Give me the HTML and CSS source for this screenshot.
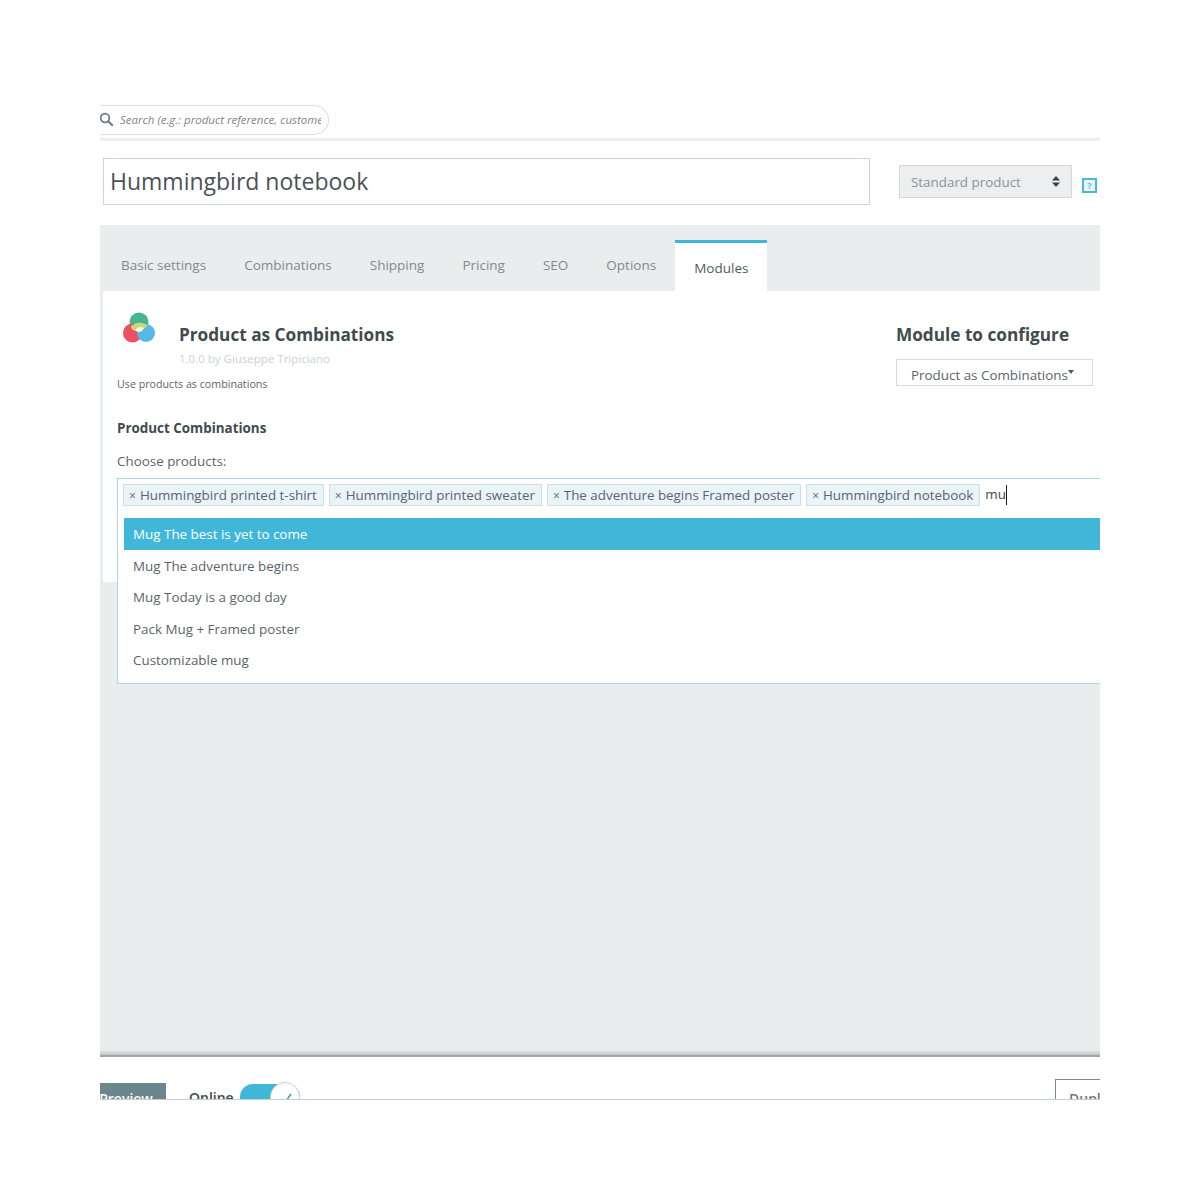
FILE: index.html
```html
<!DOCTYPE html>
<html lang="en">
<head>
<meta charset="utf-8">
<title>Hummingbird notebook</title>
<link rel="stylesheet" href="styles.css">
</head>
<body>
<div class="frame">
  <header class="topbar">
    <div class="search">
      <svg class="search-icon" width="15" height="15" viewBox="0 0 15 15"><circle cx="6" cy="6" r="4.3" fill="none" stroke="#6c7a80" stroke-width="1.7"/><path d="M9.2 9.2 13.8 13.8" stroke="#6c7a80" stroke-width="2"/></svg>
      <span class="search-text">Search (e.g.: product reference, custome</span>
    </div>
  </header>
  <div class="title-row">
    <div class="title-input">Hummingbird notebook</div>
    <div class="type-select"><span>Standard product</span>
      <svg width="8" height="11" viewBox="0 0 8 11"><path d="M4 0 8 4.4H0ZM4 11 0 6.6H8Z" fill="#3a4448"/></svg>
    </div>
    <div class="help">?</div>
  </div>
  <main class="panel">
    <nav class="tabs">
      <span class="tab">Basic settings</span>
      <span class="tab">Combinations</span>
      <span class="tab">Shipping</span>
      <span class="tab">Pricing</span>
      <span class="tab">SEO</span>
      <span class="tab">Options</span>
      <span class="tab active">Modules</span>
    </nav>
    <section class="card">
      <div class="module-head">
        <div class="module-info">
          <div class="module-id">
            <svg class="logo" width="32" height="32" viewBox="0 0 32 32">
              <circle cx="16" cy="10" r="9.5" fill="#45b58c"/>
              <circle cx="9.5" cy="21" r="9.5" fill="#ea4f62"/>
              <circle cx="23" cy="21" r="9" fill="#55b8e6"/>
              <path d="M8 14Q16 8 24 13 24 16 20 17 16 13 12 19 8 18 8 14Z" fill="#c9d777"/>
              <path d="M12 18Q16 13 21 16 19 20 16 20 13 20 12 18Z" fill="#fbf6e6"/>
            </svg>
            <div class="module-names">
              <h2 class="module-name">Product as Combinations</h2>
              <div class="module-version">1.0.0 by Giuseppe Tripiciano</div>
            </div>
          </div>
          <div class="module-desc">Use products as combinations</div>
        </div>
        <div class="configure">
          <h2 class="configure-title">Module to configure</h2>
          <div class="configure-select">Product as Combinations<i class="caret"></i></div>
        </div>
      </div>
      <h3 class="section-title">Product Combinations</h3>
      <div class="choose">Choose products:</div>
      <div class="combo">
        <div class="tags">
          <span class="tag"><b>×</b>Hummingbird printed t-shirt</span>
          <span class="tag"><b>×</b>Hummingbird printed sweater</span>
          <span class="tag"><b>×</b>The adventure begins Framed poster</span>
          <span class="tag"><b>×</b>Hummingbird notebook</span>
          <span class="typed">mu</span>
        </div>
        <ul class="options">
          <li class="option selected">Mug The best is yet to come</li>
          <li class="option">Mug The adventure begins</li>
          <li class="option">Mug Today is a good day</li>
          <li class="option">Pack Mug + Framed poster</li>
          <li class="option">Customizable mug</li>
        </ul>
      </div>
    </section>
  </main>
  <footer class="footer">
    <span class="preview">Preview</span>
    <span class="online">Online</span>
    <span class="switch"><span class="knob"><svg width="18" height="16" viewBox="0 0 18 16"><path d="M2 10 6.5 14.5 14 4" fill="none" stroke="#4a9ab3" stroke-width="1.6"/></svg></span></span>
    <span class="duplicate">Duplicate</span>
  </footer>
</div>
</body>
</html>
```
FILE: styles.css
```css
* { box-sizing: border-box; }
html, body { margin: 0; padding: 0; background: #fff; }
body { font-family: "Open Sans", "Liberation Sans", sans-serif; color: #4f5a5f; }
h2, h3, ul { margin: 0; padding: 0; }

.frame {
  width: 1000px;
  height: 1100px;
  margin-left: 100px;
  padding-top: 105px;
  overflow: hidden;
  border-bottom: 1px solid #c9cdce;
}

.topbar {
  height: 36px;
  border-bottom: 3px solid #eceeef;
}
.search {
  display: flex;
  align-items: center;
  gap: 6px;
  width: 229px;
  height: 30px;
  padding-bottom: 2px;
  border: 1px solid #d8dcdd;
  border-left: 0;
  border-radius: 0 15px 15px 0;
  overflow: hidden;
}
.search-icon { flex: none; margin-left: -1px; }
.search-text {
  width: 201px;
  overflow: hidden;
  white-space: nowrap;
  font-size: 11.5px;
  font-style: italic;
  color: #7d878b;
}

.title-row {
  display: flex;
  height: 84px;
  padding: 17px 0 0 3px;
  align-items: flex-start;
}
.title-input {
  width: 767px;
  height: 47px;
  padding-left: 6px;
  border: 1px solid #cfd4d6;
  font-size: 23px;
  line-height: 45px;
  color: #4a5357;
}
.type-select {
  display: flex;
  align-items: center;
  justify-content: space-between;
  width: 173px;
  height: 33px;
  margin: 7px 0 0 29px;
  padding: 0 11px;
  background: #eceeef;
  border: 1px solid #d3d8da;
  font-size: 13.4px;
  color: #8a9497;
}
.help {
  width: 15px;
  height: 15px;
  margin: 20px 0 0 10px;
  border: 2px solid #4bb8d4;
  background: #e8f4f7;
  font-size: 9px;
  font-weight: 700;
  line-height: 11px;
  text-align: center;
  color: #6fb8cb;
}

.panel {
  height: 832px;
  background: linear-gradient(to top, #c2c5c6, #eaedee 5px);
  border-bottom: 2px solid #a3a6a7;
}
.tabs {
  display: flex;
  align-items: flex-start;
  height: 66px;
  padding: 15px 0 0 2px;
  font-size: 13.5px;
  color: #81898d;
}
.tab {
  padding: 16px 19px 0;
  line-height: 19px;
}
.active {
  height: 51px;
  padding-top: 16px;
  background: #fff;
  border-top: 3px solid #3fb6d8;
  color: #4f5a5f;
}
.card {
  width: 997px;
  height: 291px;
  margin-left: 3px;
  padding: 21px 0 0 14px;
  background: #fff;
}

.module-head {
  display: flex;
  justify-content: space-between;
  height: 95px;
}
.module-id {
  display: flex;
  align-items: flex-start;
  gap: 24px;
  height: 61px;
}
.logo { flex: none; margin-left: 6px; }
.module-names { padding-top: 11px; }
.module-name, .configure-title {
  font-size: 17.2px;
  font-weight: 700;
  line-height: 24px;
  color: #414a4e;
}
.module-version {
  margin-top: 1px;
  font-size: 11.5px;
  line-height: 22px;
  color: #ccd1d3;
}
.module-desc {
  margin-top: 3px;
  font-size: 10.7px;
  line-height: 16px;
  color: #5b6569;
}
.configure {
  width: 204px;
  padding-top: 11px;
}
.configure-title { white-space: nowrap; }
.configure-select {
  width: 197px;
  height: 27px;
  margin-top: 12px;
  padding-left: 14px;
  border: 1px solid #d6dadb;
  font-size: 13.4px;
  line-height: 30px;
  color: #5b6569;
  white-space: nowrap;
}
.caret {
  display: inline-block;
  margin: 0 0 8px 0;
  border: 3.5px solid transparent;
  border-top: 4px solid #4f5a5f;
  border-bottom: 0;
  vertical-align: middle;
}

.section-title {
  margin-top: 11px;
  font-size: 13.4px;
  font-weight: 700;
  line-height: 20px;
  color: #414a4e;
}
.choose {
  margin-top: 13px;
  font-size: 13.4px;
  line-height: 20px;
  color: #5b6569;
}
.combo {
  width: 983px;
  height: 206px;
  margin-top: 7px;
  background: #fff;
  border: 1px solid #a6d9e6;
  border-right: 0;
}
.tags {
  display: flex;
  align-items: center;
  gap: 5px;
  height: 39px;
  padding: 0 0 7px 5px;
  white-space: nowrap;
}
.tag {
  height: 22px;
  padding: 0 6px 0 5px;
  background: #e9f4f8;
  border: 1px solid #cfdfe3;
  font-size: 13.4px;
  line-height: 20px;
  color: #5b6569;
}
.tag b {
  margin-right: 4px;
  font-weight: 400;
  font-size: 12px;
}
.typed {
  height: 20px;
  border-right: 1px solid #222;
  font-size: 13.4px;
  line-height: 18px;
  color: #414a4e;
}
.options {
  list-style: none;
  padding-left: 6px;
}
.option {
  height: 31.6px;
  padding-left: 9px;
  font-size: 13.4px;
  line-height: 32px;
  color: #5b6569;
}
.selected {
  background: #40b7d9;
  color: #fff;
}

.footer {
  display: flex;
  align-items: flex-start;
  height: 45px;
  padding-top: 26px;
  font-size: 14px;
  color: #414a4e;
}
.preview {
  flex: none;
  width: 80px;
  height: 30px;
  margin-left: -14px;
  background: #6c868e;
  color: #fff;
  font-weight: 600;
  line-height: 32px;
  text-align: center;
  white-space: nowrap;
}
.online {
  margin: 5px 0 0 23px;
  font-weight: 600;
  line-height: 20px;
}
.switch {
  position: relative;
  width: 60px;
  height: 26px;
  margin: 1px 0 0 6px;
  background: #40b7d9;
  border-radius: 13px;
}
.knob {
  position: absolute;
  top: -2px;
  right: 0;
  width: 30px;
  height: 30px;
  padding: 7px 0 0 6px;
  background: #fff;
  border: 1px solid #ccd2d4;
  border-radius: 50%;
}
.knob svg { display: block; }
.duplicate {
  width: 90px;
  height: 40px;
  margin: -4px -45px 0 auto;
  padding-left: 13px;
  border: 1px solid #7e8a8f;
  font-weight: 600;
  line-height: 38px;
  color: #6c7a80;
}
```
